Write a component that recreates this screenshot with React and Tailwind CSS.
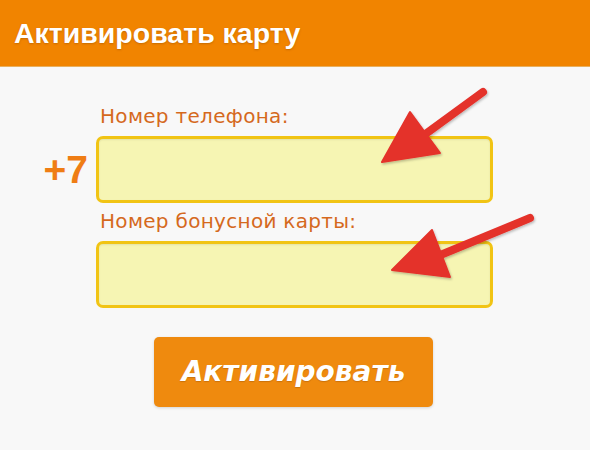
import React from 'react'

const Arrows = () => (
  <svg className="absolute inset-0 pointer-events-none" width="590" height="450" viewBox="0 0 590 450">
    <defs>
      <filter id="sh" x="-20%" y="-20%" width="140%" height="140%">
        <feDropShadow dx="1" dy="1.5" stdDeviation="1.2" floodColor="#000" floodOpacity="0.25" />
      </filter>
    </defs>
    <g fill="#e4312b" stroke="#e4312b" filter="url(#sh)">
      <line x1="483" y1="92" x2="420" y2="138" strokeWidth="8" strokeLinecap="round" />
      <polygon points="382,162 410,112 440,153" strokeWidth="2" strokeLinejoin="round" />
      <line x1="530" y1="218" x2="438" y2="256" strokeWidth="8" strokeLinecap="round" />
      <polygon points="392,270 432,230 450,277" strokeWidth="2" strokeLinejoin="round" />
    </g>
  </svg>
)

const Field = ({ label, prefix }) => (
  <div>
    <div className="pl-[100px] text-[20px] tracking-[0.3px] leading-[24px] text-[#d5691d]" style={{ fontFamily: '"DejaVu Sans", Verdana, sans-serif' }}>
      {label}
    </div>
    <div className="flex items-center mt-[8px]">
      <div className="w-[96px] pr-[8px] text-right text-[39px] font-bold text-[#ef7d14] leading-none" style={{ fontFamily: '"Liberation Sans", Arial, sans-serif' }}>
        {prefix}
      </div>
      <div className="w-[397px] h-[67px] rounded-[7px] border-[3px] border-[#f1c414] bg-[#f6f5b3] shadow-[inset_0_1px_2px_rgba(0,0,0,0.08)]" />
    </div>
  </div>
)

export default function App() {
  return (
    <div className="relative w-[590px] h-[450px] bg-[#f8f8f8] overflow-hidden">
      <div className="h-[67px] bg-[#f18400] flex items-center pl-[14px] border-b border-[#e8b060]">
        <h1 className="text-white font-bold text-[28.5px] [text-shadow:0_1px_2px_rgba(120,60,0,0.35)]" style={{ fontFamily: '"Liberation Sans", Arial, sans-serif' }}>
          Активировать карту
        </h1>
      </div>

      <div className="pt-[37px]">
        <Field label="Номер телефона:" prefix="+7" />
        <div className="mt-[6px]">
          <Field label="Номер бонусной карты:" prefix="" />
        </div>
      </div>

      <div className="flex mt-[29px] pl-[154px]">
        <button className="w-[279px] h-[70px] rounded-[5px] bg-[#ef8a0e] shadow-[0_1px_3px_rgba(0,0,0,0.15)] text-white font-bold italic text-[28px] [text-shadow:0_1px_1px_rgba(120,60,0,0.3)]" style={{ fontFamily: '"DejaVu Sans", Verdana, sans-serif' }}>
          Активировать
        </button>
      </div>

      <Arrows />
    </div>
  )
}
